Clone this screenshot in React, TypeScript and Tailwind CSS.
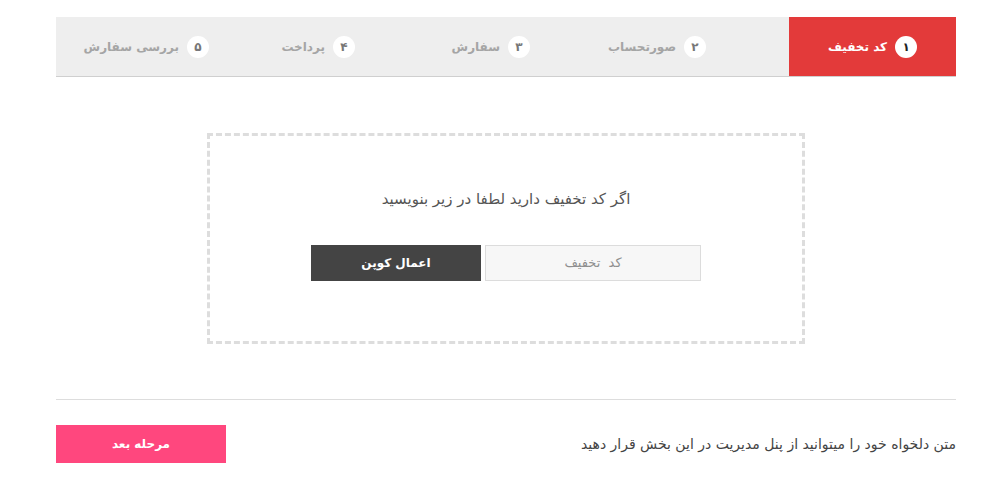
import React from 'react'

const steps = [
  { n: '۱', label: 'کد تخفیف', w: 'w-[167px]', pr: 'justify-center', active: true },
  { n: '۲', label: 'صورتحساب', w: 'w-[209px]', pr: 'pr-[83px]', active: false },
  { n: '۳', label: 'سفارش', w: 'w-[176px]', pr: 'pr-[50px]', active: false },
  { n: '۴', label: 'پرداخت', w: 'w-[175px]', pr: 'pr-[49px]', active: false },
  { n: '۵', label: 'بررسی سفارش', w: 'w-[173px]', pr: 'pr-[20px]', active: false },
]

export default function App() {
  return (
    <div className="min-h-screen bg-white pt-[17px] font-['DejaVu_Sans',sans-serif]">
      <div dir="rtl" className="ml-[56px] w-[900px]">
        {/* steps */}
        <div className="flex h-[60px] border-b border-[#cfcfcf] bg-[#eeeeee]">
          {steps.map(s => (
            <div
              key={s.n}
              className={`${s.w} ${s.pr} flex items-center gap-2 ${s.active ? 'bg-[#e33a3a]' : ''}`}
            >
              <span
                className={`flex h-[22px] w-[22px] items-center justify-center rounded-full bg-white text-[12px] font-bold ${
                  s.active ? 'text-[#222]' : 'text-[#777]'
                }`}
              >
                {s.n}
              </span>
              <span className={`text-[12px] font-bold ${s.active ? 'text-white' : 'text-[#a5a5a5]'}`}>
                {s.label}
              </span>
            </div>
          ))}
        </div>

        {/* coupon box */}
        <div className="mx-auto mt-[56px] flex h-[211px] w-[598px] flex-col items-center border-[3px] border-dashed border-[#dddddd] pt-[52px]">
          <p className="text-[15px] text-[#555]">اگر کد تخفیف دارید لطفا در زیر بنویسید</p>
          <div className="mt-[34px] flex gap-[4px]">
            <input
              className="h-[36px] w-[216px] border border-[#dcdcdc] bg-[#f7f7f7] text-center text-[13px] tracking-[4px] text-[#666] placeholder:text-[#8f8f8f] focus:outline-none"
              placeholder="کد  تخفیف"
            />
            <button className="h-[36px] w-[170px] bg-[#444444] text-[12px] font-bold text-white">
              اعمال کوپن
            </button>
          </div>
        </div>

        <div className="mt-[55px] border-t border-[#dddddd]" />

        <div className="mt-[25px] flex items-center justify-between">
          <p className="text-[14px] text-[#444]">متن دلخواه خود را میتوانید از پنل مدیریت در این بخش قرار دهید</p>
          <button className="h-[38px] w-[170px] bg-[#ff477e] text-[12px] font-bold text-white">مرحله بعد</button>
        </div>
      </div>
    </div>
  )
}
